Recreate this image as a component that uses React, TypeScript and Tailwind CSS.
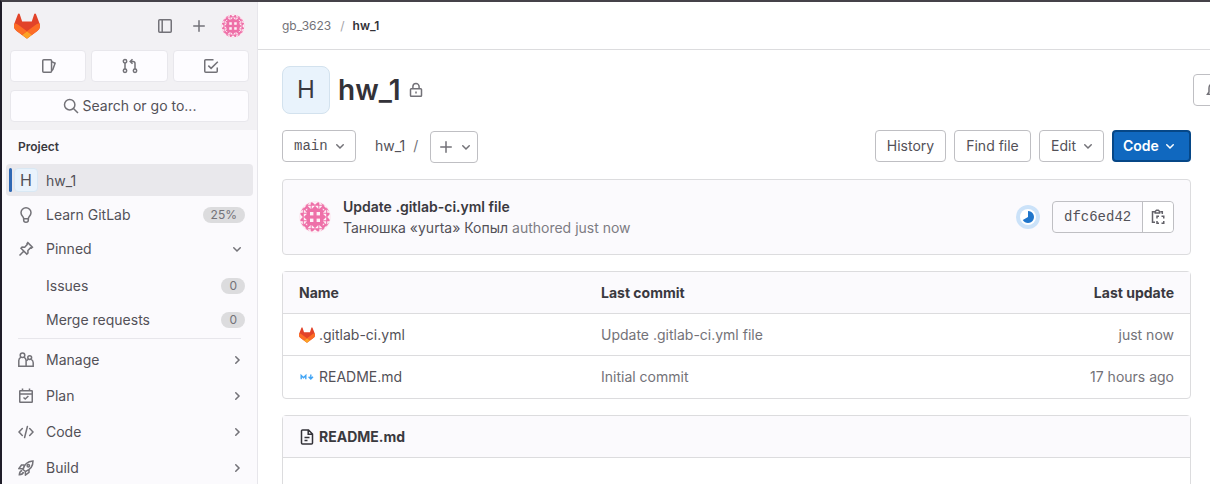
import React from "react";

const sans = "font-[Inter,'Noto_Sans',sans-serif]";
const mono = "font-['Liberation_Mono',monospace]";

function Icon({ children, size = 16, className = "text-[#737278]" }: { children: React.ReactNode; size?: number; className?: string }) {
  return (
    <svg width={size} height={size} viewBox="0 0 16 16" fill="none" stroke="currentColor" strokeWidth="1.5" className={`shrink-0 ${className}`}>
      {children}
    </svg>
  );
}

const Down = ({ className = "text-[#737278]" }: { className?: string }) => (
  <Icon className={className}><path d="M4.750 6.750 8 10l3.250-3.250" strokeLinecap="round" /></Icon>
);
const Right = () => (
  <Icon><path d="M6.750 4.750 10 8l-3.250 3.250" strokeLinecap="round" /></Icon>
);
const Plus = () => (
  <Icon><path d="M8 2.750v10.500M2.750 8h10.500" strokeLinecap="round" /></Icon>
);

function Tanuki({ size }: { size: number }) {
  return (
    <svg width={size} height={size} viewBox="0 0 25 24" className="shrink-0">
      <path d="m24.507 9.5-.034-.09L21.082.562a.896.896 0 0 0-1.694.091l-2.29 7.01H7.825L5.535.653a.898.898 0 0 0-1.694-.09L.451 9.411.416 9.5a6.297 6.297 0 0 0 2.09 7.278l.012.01.03.022 5.16 3.867 2.56 1.935 1.554 1.176a1.051 1.051 0 0 0 1.268 0l1.555-1.176 2.56-1.935 5.197-3.89.014-.01A6.297 6.297 0 0 0 24.507 9.5Z" fill="#E24329" />
      <path d="m24.507 9.5-.034-.09a11.44 11.44 0 0 0-4.56 2.051l-7.447 5.632 4.742 3.584 5.197-3.89.014-.01A6.297 6.297 0 0 0 24.507 9.5Z" fill="#FC6D26" />
      <path d="m7.707 20.677 2.56 1.935 1.555 1.176a1.051 1.051 0 0 0 1.268 0l1.555-1.176 2.56-1.935-4.743-3.584-4.755 3.584Z" fill="#FCA326" />
      <path d="M5.01 11.461a11.43 11.43 0 0 0-4.56-2.05L.416 9.5a6.297 6.297 0 0 0 2.09 7.278l.012.01.03.022 5.16 3.867 4.745-3.584-7.444-5.632Z" fill="#FC6D26" />
    </svg>
  );
}

const quadrants = ["", "translate(32 0) scale(-1 1)", "translate(0 32) scale(1 -1)", "translate(32 32) scale(-1 -1)"];

function Identicon({ size }: { size: number }) {
  return (
    <svg width={size} height={size} viewBox="0 0 32 32" className="shrink-0 rounded-full">
      <circle cx="16" cy="16" r="16" fill="#fbeaf2" />
      <circle cx="16" cy="16" r="15" fill="#ee70a8" />
      {quadrants.map((t) => (
        <g key={t} transform={t} fill="#fdf1f6">
          <rect x="11" y="11" width="3.400" height="3.400" />
          <path d="M8.500 4.800h3.200v3.200zM12.700 4.800h3.300l-3.300 3.300zM12.700 .8h3.300v3zM8.500 3.800l3.200-3v3z" />
          <path d="M4.800 8.500v3.200h3.200zM4.800 12.700v3.300l3.300-3.300zM.8 12.700v3.300h3zM3.800 8.500l-3 3.200h3z" />
          <path d="M4.500 4.500h3l-3 3zM8.200 7.200v2l-2 .1z" />
        </g>
      ))}
    </svg>
  );
}

function NavRow({ icon, label, end, className = "h-9" }: { icon?: React.ReactNode; label: string; end?: React.ReactNode; className?: string }) {
  return (
    <div className={`flex shrink-0 items-center pl-4 pr-3 text-sm text-[#535158] ${className}`}>
      <span className="w-7 shrink-0">{icon}</span>
      <span className="flex-1">{label}</span>
      {end}
    </div>
  );
}

const Badge = ({ children }: { children: React.ReactNode }) => (
  <span className="flex h-4 items-center rounded-full bg-[#dcdcde] px-2 text-xs text-[#737278]">{children}</span>
);

const TopButton = ({ children }: { children: React.ReactNode }) => (
  <div className="flex h-8 flex-1 items-center justify-center rounded border border-[#e8e7ec] bg-[#fdfcff] pl-px">{children}</div>
);

function Button({ children, className = "" }: { children: React.ReactNode; className?: string }) {
  return (
    <div className={`flex h-8 shrink-0 items-center rounded border border-[#bfbfc3] bg-white text-sm text-[#535158] ${className}`}>{children}</div>
  );
}

function Sidebar() {
  return (
    <aside className="flex w-64 shrink-0 flex-col border-r border-[#e7e6eb] bg-[#fbfafd]">
      <div className="h-32 shrink-0 bg-[#f2f1f4] px-2">
        <div className="flex h-12 items-center pl-1">
          <Tanuki size={26} />
          <div className="ml-auto flex items-center gap-[18px] pr-1">
            <Icon><rect x="1.75" y="1.75" width="12.5" height="12.5" rx="1" /><path d="M5.2 2v12" /></Icon>
            <Plus />
            <span className="-ml-[4px]"><Identicon size={24} /></span>
          </div>
        </div>
        <div className="flex gap-[5px]">
          <TopButton><Icon><rect x="1.75" y="1.75" width="8.8" height="12.5" rx="1" /><path d="M10.500 3.600l3.600 1.600-2.300 6.300-1.300 1.300" /></Icon></TopButton>
          <TopButton><Icon><circle cx="3" cy="3.2" r="1.7" /><circle cx="3" cy="12.8" r="1.7" /><circle cx="13" cy="12.8" r="1.7" /><path d="M3 5v6M13 11V5.5a2 2 0 0 0-2-2H8.700M10.500 1.2 8.200 3.5l2.300 2.300" /></Icon></TopButton>
          <TopButton><Icon><path d="M10.5 1.75H2.75a1 1 0 0 0-1 1v10.5a1 1 0 0 0 1 1h10.5a1 1 0 0 0 1-1V9.5M5.3 7.6l2.8 2.8 6.7-6.7" /></Icon></TopButton>
        </div>
        <div className="mt-2 flex h-8 items-center justify-center gap-1 rounded border border-[#e8e7ec] bg-[#fdfcff] text-sm text-[#535158]">
          <Icon><circle cx="6.7" cy="6.7" r="5.2" /><path d="m10.5 10.5 4.5 4.5" /></Icon>
          Search or go to...
        </div>
      </div>
      <div className="flex h-[33px] shrink-0 items-center pl-4 text-xs font-semibold text-[#3a393f]">Project</div>
      <div className="mx-1 mt-px flex h-8 shrink-0 items-center rounded bg-[#e9e8ec] pl-[3px] text-sm text-[#535158]">
        <span className="h-6 w-[3px] rounded-full bg-[#2f68b4]" />
        <span className="ml-0.5 flex size-6 items-center justify-center rounded-sm border border-[#d9e8f4] bg-[#e9f3fc] text-base">H</span>
        <span className="ml-2 pt-0.5">hw_1</span>
      </div>
      <NavRow className="mt-0.5 h-[34px]" label="Learn GitLab" end={<Badge>25%</Badge>}
        icon={<Icon><path d="M5.600 11.300c0-1.400-2.600-2.500-2.600-5.500a5 5 0 0 1 10 0c0 3-2.600 4.100-2.600 5.500v.4H5.600zM5.700 12v1.200c0 2.700 4.600 2.700 4.600 0V12" /></Icon>} />
      <NavRow className="h-[34px]" label="Pinned" end={<Down />}
        icon={<Icon><path d="m9.8 1.6 4.6 4.6-1.1.9-.9-.2-2.5 2.6.1 2.5-1.2 1.1L3 7.3l1.1-1.2 2.6.1 2.5-2.6-.2-.9zM5.7 10.3 1.5 14.5" /></Icon>} />
      <NavRow className="mt-[3px] h-[34px]" label="Issues" end={<Badge>0</Badge>} />
      <NavRow className="h-[34px]" label="Merge requests" end={<Badge>0</Badge>} />
      <div className="mx-4 mb-[3px] mt-px h-px shrink-0 bg-[#e7e6eb]" />
      <NavRow label="Manage" end={<Right />}
        icon={<Icon><circle cx="4.5" cy="3.2" r="2.3" /><circle cx="11.700" cy="5.600" r="1.900" /><path d="M3 5.2c-1.500.8-2.200 1.800-2.200 3.300v5.700h7.300V8.500c0-1.500-.7-2.500-2.100-3.300M8.200 14.200h7v-3.500c0-1.700-.9-2.700-2-3.300M10.200 7.200 8 9.200" /></Icon>} />
      <NavRow label="Plan" end={<Right />}
        icon={<Icon><rect x="1.75" y="2.75" width="12.5" height="11.5" rx=".5" /><path d="M2 6h12M4.5 .5v2.5M11.5 .5v2.5M5.5 9.5 7.2 11l3.2-3" /></Icon>} />
      <NavRow label="Code" end={<Right />}
        icon={<Icon><path d="M4.3 4.5 1 8l3.3 3.500M11.7 4.5 15 8l-3.3 3.500M9.4 2.500l-2.800 11" strokeLinecap="round" /></Icon>} />
      <NavRow label="Build" end={<Right />}
        icon={<Icon><path d="M5 9.5C6 5 9.500 1.500 15 1c0 5-3 8.800-7.500 10.500zM6.400 5H3.500L1 8.500l3.800.3M11 9.300v3L7.500 15l-.2-3.500M4.200 10.500C2.500 10.800 1.500 12.500 1.300 14.700c2 0 3.700-.9 4.200-2.700" /><circle cx="10.300" cy="5.700" r="1.200" /></Icon>} />
    </aside>
  );
}

function Main() {
  return (
    <main className="flex min-w-0 flex-1 flex-col">
      <div className="flex h-12 shrink-0 items-center gap-2 border-b border-[#dcdcde] pl-6 text-xs text-[#737278]">
        <span>gb_3623</span>
        <span className="pl-px text-[#a4a3a8]">/</span>
        <span className="font-semibold text-[#333238]">hw_1</span>
      </div>
      <div className="mt-4 flex h-12 shrink-0 items-center pl-6">
        <div className="flex size-12 items-center justify-center rounded-lg border border-[#d3e2ee] bg-[#e9f3fc] text-2xl text-[#3a393f]">H</div>
        <h1 className="ml-2 text-[28px] font-semibold text-[#333238]">hw_1</h1>
        <Icon className="ml-[7px] text-[#737278]"><rect x="2.5" y="6.75" width="11" height="7.5" rx=".8" /><path d="M4.900 6.5V4.600a3.100 3.100 0 0 1 6.200 0v1.900M8 9.500v2" /></Icon>
        <div className="ml-auto w-[17px] overflow-hidden">
          <Button className="w-20 pl-3"><Icon><path d="M1.500 12.250h13L13 10V6A5 5 0 0 0 3 6v4z" /></Icon></Button>
        </div>
      </div>
      <div className="mt-4 flex h-8 shrink-0 items-center pl-6 pr-[19px]">
        <Button className={`w-[74px] gap-1 pl-[11px] ${mono}`}>main<Down /></Button>
        <span className="ml-[19px] text-sm text-[#535158]">hw_1</span>
        <span className="ml-2 text-sm text-[#737278]">/</span>
        <Button className="ml-3 mt-0.5 w-12 gap-1 pl-[7px]"><Plus /><Down /></Button>
        <div className="ml-auto flex gap-2">
          <Button className="w-[71px] justify-center">History</Button>
          <Button className="w-[77px] justify-center">Find file</Button>
          <Button className="w-[65px] gap-1 pl-[11px]">Edit<Down /></Button>
          <div className="flex h-8 w-[79px] items-center gap-[3px] rounded border-2 border-[#064787] bg-[#1068bf] pl-[9px] text-sm font-semibold text-white">Code<Down className="text-white" /></div>
        </div>
      </div>
      <div className="ml-6 mr-[19px] mt-[17px] flex h-[76px] shrink-0 items-center rounded border border-[#dcdcde] bg-[#fbfafd] px-4">
        <Identicon size={32} />
        <div className="ml-3 text-sm leading-[21px] text-[#535158]">
          <div className="font-semibold text-[#3a393f]">Update .gitlab-ci.yml file</div>
          <div>Танюшка «yurta» Копыл <span className="text-[#7d7c83]">authored just now</span></div>
        </div>
        <svg width="24" height="24" viewBox="0 0 24 24" className="ml-auto">
          <circle cx="12" cy="12" r="12" fill="#cbe2f9" />
          <circle cx="12" cy="12" r="8" fill="#fff" />
          <path d="M12 6a6 6 0 1 1-5.2 9L12 12z" fill="#1f75cb" />
        </svg>
        <div className={`ml-3 flex h-8 w-[122px] rounded border border-[#bfbfc3] text-sm text-[#535158] ${mono}`}>
          <span className="flex w-[90px] items-center border-r border-[#bfbfc3] pl-[11px]">dfc6ed42</span>
          <span className="flex flex-1 items-center justify-center rounded-r bg-white">
            <Icon className="text-[#626168]"><path d="M4.500 2.750H2.500v10.500H5M10.500 2.750h1.800V5M5.200 4V2.500L6.500 1.200h1.800l1.300 1.300V4z" /><path d="M7 9.500V7.250H9M11.500 7.250h2.250V9.500M13.750 12v2.250H11.500M9 14.250H7V12" /></Icon>
          </span>
        </div>
      </div>
      <div className="ml-6 mr-[19px] mt-4 flex shrink-0 flex-col rounded border border-[#dcdcde] text-sm text-[#535158]">
        <div className="flex h-[42px] items-center border-b border-[#dcdcde] bg-[#fbfafd] px-4 font-bold text-[#3a393f]">
          <span className="w-[302px]">Name</span><span className="flex-1">Last commit</span><span>Last update</span>
        </div>
        <div className="flex h-[42px] items-center border-b border-[#dcdcde] px-4">
          <span className="flex w-[302px] items-center gap-1"><Tanuki size={16} />.gitlab-ci.yml</span><span className="flex-1 text-[#737278]">Update .gitlab-ci.yml file</span><span className="text-[#737278]">just now</span>
        </div>
        <div className="flex h-[42px] items-center px-4">
          <span className="flex w-[302px] items-center gap-1">
            <svg width="16" height="16" viewBox="0 0 16 16" fill="none" stroke="#42a5f5" strokeWidth="1.400"><path d="M2.200 10.300V6.400l2.300 2.400 2.300-2.400v3.900M11.800 5.500v4M9.600 7.800l2.200 2.300L14 7.800" /></svg>
            README.md
          </span>
          <span className="flex-1 text-[#737278]">Initial commit</span><span className="text-[#737278]">17 hours ago</span>
        </div>
      </div>
      <div className="ml-6 mr-[19px] mt-4 flex h-24 shrink-0 flex-col rounded border border-[#dcdcde]">
        <div className="flex h-[42px] shrink-0 items-center gap-1 border-b border-[#dcdcde] bg-[#fbfafd] px-4 text-sm font-bold text-[#3a393f]">
          <Icon className="text-[#333238]"><path d="M9.5 1H3.500a1 1 0 0 0-1 1v12a1 1 0 0 0 1 1h9a1 1 0 0 0 1-1V5zM9.200 1.300v4h4M5.500 8.500h5M5.500 11.500h3" /></Icon>
          README.md
        </div>
      </div>
    </main>
  );
}

export default function App() {
  return (
    <div className={`flex h-[484px] overflow-hidden border-l-2 border-t-2 border-l-[#1f1d29] border-t-[#454249] bg-white ${sans}`}>
      <Sidebar />
      <Main />
    </div>
  );
}
